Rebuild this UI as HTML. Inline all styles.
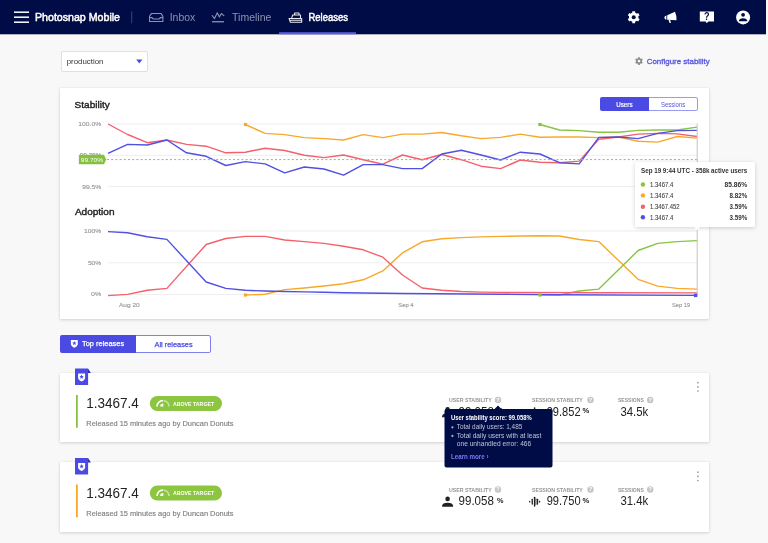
<!DOCTYPE html>
<html><head><meta charset="utf-8"><title>Releases - Photosnap Mobile</title>
<style>
html,body{margin:0;padding:0;}
body{width:768px;height:543px;overflow:hidden;background:#f8f8f8;font-family:"Liberation Sans", sans-serif;position:relative;}
.abs{position:absolute;}
.nav{left:0;top:0;width:766px;height:34px;background:#000c45;box-shadow:0 0.5px 0 rgba(0,12,69,0.6);}
.card{background:#fff;box-shadow:0 1px 3px rgba(0,0,0,0.15),0 0 1px rgba(0,0,0,0.10);border-radius:0;}
svg{position:absolute;left:0;top:0;overflow:visible;will-change:transform;}
svg text{font-family:"Liberation Sans", sans-serif;}
</style></head><body>
<div class="abs nav"></div>
<div class="abs" style="left:60.5px;top:50.5px;width:85px;height:19px;border:1px solid #dedcf8;border-radius:2px;background:#fff"></div>
<div class="abs card" style="left:60px;top:88px;width:649px;height:231px"></div>
<div class="abs" style="left:600.2px;top:96.6px;width:48.7px;height:14px;background:#4b4be3;border-radius:2px 0 0 2px"></div>
<div class="abs" style="left:648.9px;top:96.6px;width:48.4px;height:12px;border:1px solid #9a9af3;border-left:none;border-radius:0 2.5px 2.5px 0;background:#fff"></div>
<div class="abs" style="left:60.2px;top:335.1px;width:75.4px;height:17.5px;background:#4b4be3;border-radius:2px 0 0 2px"></div>
<div class="abs" style="left:135.6px;top:335.1px;width:74.5px;height:15.5px;border:1px solid #8080ec;border-left:none;border-radius:0 2.5px 2.5px 0;background:#fff"></div>
<div class="abs card" style="left:60px;top:373px;width:649px;height:69px"></div>
<div class="abs card" style="left:60px;top:462px;width:649px;height:70px"></div>
<svg width="768" height="543" viewBox="0 0 768 543">
<rect x="14" y="11.45" width="15" height="1.5" fill="#fff"/>
<rect x="14" y="16.45" width="15" height="1.5" fill="#fff"/>
<rect x="14" y="21.45" width="15" height="1.5" fill="#fff"/>
<text x="35.00" y="21.00" font-size="11.3" fill="#fff" stroke="#fff" stroke-width="0.5" textLength="85.00" lengthAdjust="spacingAndGlyphs">Photosnap Mobile</text>
<rect x="131.2" y="11.2" width="1" height="12" fill="#3b4376"/>
<path d="M149.5 21.5 V16.4 L151.5 13.4 H160.9 L162.9 16.4 V21.5 Z M149.5 17.6 H152 Q152.8 18.9 153.8 18.9 H158.6 Q159.6 18.9 160.4 17.6 H162.9" fill="none" stroke="#8d92b3" stroke-width="1.05" stroke-linejoin="round"/>
<text x="169.70" y="21.00" font-size="11.3" fill="#8d92b3" textLength="25.50" lengthAdjust="spacingAndGlyphs">Inbox</text>
<path d="M212.2 15.5 L214.5 18.6 L217.3 12.7 L219.4 16.9 L221.4 13.5 L223.9 15.6" fill="none" stroke="#8d92b3" stroke-width="1.1" stroke-linejoin="round" stroke-linecap="round"/>
<rect x="212" y="21.1" width="12" height="1.3" fill="#8d92b3"/>
<text x="232.10" y="21.00" font-size="11.3" fill="#8d92b3" textLength="39.20" lengthAdjust="spacingAndGlyphs">Timeline</text>
<path d="M289 18.4 H301.7 V22.2 H290.4 Z M289.6 20.3 H301.7 M291.6 18.4 L292.7 14.9 H300.5 V18.4 M294.6 14.9 V12.9 H299 V14.9" fill="none" stroke="#e8e9f0" stroke-width="1.05" stroke-linejoin="round"/>
<text x="308.50" y="21.00" font-size="11.3" fill="#fff" stroke="#fff" stroke-width="0.5" textLength="39.50" lengthAdjust="spacingAndGlyphs">Releases</text>
<rect x="279" y="32.2" width="77" height="2" fill="#5a5ae8"/>
<path d="M632.25 11.17 L635.15 11.17 L635.06 12.60 L637.00 13.72 L638.20 12.93 L639.64 15.44 L638.37 16.08 L638.37 18.32 L639.64 18.96 L638.20 21.47 L637.00 20.68 L635.06 21.80 L635.15 23.23 L632.25 23.23 L632.34 21.80 L630.40 20.68 L629.20 21.47 L627.76 18.96 L629.03 18.32 L629.03 16.08 L627.76 15.44 L629.20 12.93 L630.40 13.72 L632.34 12.60Z" fill="#fff"/><circle cx="633.7" cy="17.2" r="2.0" fill="#000c45"/>
<path d="M667.2 15.3 L675.0 11.7 Q676.9 15.8 676.5 20.3 L667.2 19.7 Z" fill="#fff"/><path d="M666.4 15.5 Q664.3 15.8 664.4 17.7 Q664.6 19.7 666.4 19.7 Z" fill="#fff"/><path d="M668.5 19.7 L669.6 23.1 L670.9 22.9 L670.2 19.8 Z" fill="#fff"/>
<path d="M699.8 11.6 H714 V21.6 H708.2 L706.9 23.2 L705.6 21.6 H699.8 Z" fill="#fff"/>
<text x="703.90" y="20.10" font-size="10.4" fill="#000c45" font-weight="700" textLength="5.50" lengthAdjust="spacingAndGlyphs">?</text>
<circle cx="743.1" cy="17.4" r="7" fill="#fff"/><circle cx="743.1" cy="14.8" r="1.9" fill="#000c45"/><path d="M738.8 21.2 Q739.2 18.4 743.1 18.3 Q747 18.4 747.4 21.2 Z" fill="#000c45"/>
<text x="66.70" y="64.10" font-size="7.7" fill="#333" textLength="36.70" lengthAdjust="spacingAndGlyphs">production</text>
<path d="M136.2 59.6 H142.4 L139.3 63.4 Z" fill="#4b4be3"/>
<path d="M638.07 57.21 L639.93 57.21 L639.85 58.22 L641.07 58.92 L641.90 58.35 L642.84 59.96 L641.92 60.40 L641.92 61.80 L642.84 62.24 L641.90 63.85 L641.07 63.28 L639.85 63.98 L639.93 64.99 L638.07 64.99 L638.15 63.98 L636.93 63.28 L636.10 63.85 L635.16 62.24 L636.08 61.80 L636.08 60.40 L635.16 59.96 L636.10 58.35 L636.93 58.92 L638.15 58.22Z" fill="#8a8a8a"/><circle cx="639" cy="61.1" r="1.3" fill="#f8f8f8"/>
<text x="646.70" y="63.80" font-size="7.6" fill="#5555dd" stroke="#5555dd" stroke-width="0.3" textLength="63.10" lengthAdjust="spacingAndGlyphs">Configure stability</text>
<text x="74.60" y="107.90" font-size="9.9" fill="#222" stroke="#222" stroke-width="0.4" textLength="35.20" lengthAdjust="spacingAndGlyphs">Stability</text>
<rect x="108" y="123.5" width="589" height="1" fill="#eeeeee"/>
<rect x="108" y="154.8" width="589" height="1" fill="#eeeeee"/>
<rect x="108" y="186.1" width="589" height="1" fill="#eeeeee"/>
<text x="78.30" y="125.90" font-size="6.2" fill="#999" stroke="#999" stroke-width="0.15" textLength="23.00" lengthAdjust="spacingAndGlyphs">100.0%</text>
<text x="80.00" y="157.40" font-size="6.2" fill="#999" stroke="#999" stroke-width="0.15" textLength="21.30" lengthAdjust="spacingAndGlyphs">99.75%</text>
<text x="82.30" y="188.90" font-size="6.2" fill="#999" stroke="#999" stroke-width="0.15" textLength="19.00" lengthAdjust="spacingAndGlyphs">99.5%</text>
<polyline points="539.93,124.50 559.57,130.00 579.20,130.60 598.83,132.30 618.47,132.30 638.10,130.40 657.73,130.00 677.37,130.00 697.00,127.10" fill="none" stroke="#88c440" stroke-width="1.4" stroke-linejoin="round" stroke-linecap="butt"/>
<polyline points="245.43,124.50 265.07,133.40 284.70,134.60 304.33,137.60 323.97,138.60 343.60,140.00 363.23,134.60 382.87,137.60 402.50,134.10 422.13,134.10 441.77,132.50 461.40,135.80 481.03,138.60 500.67,137.40 520.30,134.10 539.93,137.20 559.57,137.00 579.20,137.00 598.83,137.60 618.47,137.00 638.10,141.20 657.73,142.10 677.37,136.50 697.00,138.10" fill="none" stroke="#f8a92a" stroke-width="1.4" stroke-linejoin="round" stroke-linecap="butt"/>
<polyline points="108.00,124.00 127.63,134.50 147.27,142.70 166.90,140.00 186.53,144.40 206.17,146.20 225.80,152.80 245.43,152.20 265.07,148.20 284.70,150.50 304.33,155.20 323.97,157.60 343.60,155.00 363.23,159.70 382.87,164.20 402.50,155.00 422.13,159.70 441.77,154.50 461.40,159.70 481.03,166.20 500.67,168.60 520.30,160.00 539.93,162.30 559.57,162.70 579.20,161.10 598.83,139.30 618.47,137.00 638.10,134.10 657.73,133.40 677.37,133.90 697.00,136.50" fill="none" stroke="#f4606c" stroke-width="1.4" stroke-linejoin="round" stroke-linecap="butt"/>
<polyline points="108.00,153.30 127.63,144.40 147.27,145.00 166.90,140.00 186.53,152.80 206.17,156.30 225.80,165.50 245.43,161.60 265.07,163.90 284.70,172.80 304.33,167.00 323.97,169.00 343.60,175.20 363.23,164.60 382.87,164.60 402.50,168.60 422.13,168.60 441.77,154.00 461.40,150.30 481.03,155.00 500.67,160.00 520.30,152.20 539.93,154.00 559.57,162.70 579.20,163.90 598.83,137.40 618.47,137.00 638.10,138.60 657.73,133.40 677.37,130.60 697.00,130.40" fill="none" stroke="#5050e3" stroke-width="1.4" stroke-linejoin="round" stroke-linecap="butt"/>
<rect x="243.83333333333334" y="122.9" width="3.2" height="3.2" fill="#f8a92a"/>
<rect x="538.3333333333334" y="122.9" width="3.2" height="3.2" fill="#88c440"/>
<line x1="107" y1="159.6" x2="697" y2="159.6" stroke="#8bc34a" stroke-width="1" stroke-dasharray="2 2.2"/>
<path d="M78.9 154.8 H104 L106.2 159.5 L104 164.2 H78.9 Z" fill="#85c13f"/>
<text x="80.80" y="162.10" font-size="6.1" fill="#fff" textLength="22.20" lengthAdjust="spacingAndGlyphs">99.70%</text>
<text x="74.90" y="215.30" font-size="9.9" fill="#222" stroke="#222" stroke-width="0.4" textLength="39.60" lengthAdjust="spacingAndGlyphs">Adoption</text>
<rect x="108" y="230.5" width="589" height="1" fill="#eeeeee"/>
<rect x="108" y="262.3" width="589" height="1" fill="#eeeeee"/>
<rect x="108" y="294.0" width="589" height="1" fill="#eeeeee"/>
<text x="84.10" y="233.20" font-size="6.2" fill="#999" stroke="#999" stroke-width="0.15" textLength="17.20" lengthAdjust="spacingAndGlyphs">100%</text>
<text x="87.90" y="265.40" font-size="6.2" fill="#999" stroke="#999" stroke-width="0.15" textLength="13.40" lengthAdjust="spacingAndGlyphs">50%</text>
<text x="91.10" y="296.30" font-size="6.2" fill="#999" stroke="#999" stroke-width="0.15" textLength="10.20" lengthAdjust="spacingAndGlyphs">0%</text>
<polyline points="245.43,295.00 265.07,294.30 284.70,289.60 304.33,288.00 323.97,286.00 343.60,283.70 363.23,279.80 382.87,270.90 402.50,252.80 422.13,241.80 441.77,238.70 461.40,237.60 481.03,236.90 500.67,236.40 520.30,236.00 539.93,235.70 559.57,236.00 579.20,239.50 598.83,241.60 638.10,279.30 657.73,286.10 677.37,288.40 697.00,289.10" fill="none" stroke="#f8a92a" stroke-width="1.4" stroke-linejoin="round" stroke-linecap="butt"/>
<polyline points="539.93,295.00 559.57,295.00 579.20,291.00 598.83,289.10 638.10,250.50 657.73,243.40 677.37,241.60 697.00,240.60" fill="none" stroke="#88c440" stroke-width="1.4" stroke-linejoin="round" stroke-linecap="butt"/>
<polyline points="108.00,295.60 127.63,294.40 147.27,290.20 166.90,288.40 206.17,244.50 225.80,238.50 245.43,236.40 265.07,236.40 284.70,240.00 304.33,241.60 323.97,243.40 343.60,246.20 363.23,249.80 382.87,257.20 402.50,275.00 422.13,288.00 441.77,290.30 461.40,291.50 481.03,292.10 500.67,292.40 598.83,292.70 697.00,292.90" fill="none" stroke="#f4606c" stroke-width="1.4" stroke-linejoin="round" stroke-linecap="butt"/>
<polyline points="108.00,231.60 127.63,232.80 147.27,236.80 166.90,239.40 206.17,282.00 225.80,288.40 245.43,290.30 265.07,291.00 284.70,291.50 304.33,291.90 323.97,292.30 343.60,292.70 363.23,293.00 382.87,293.30 402.50,293.50 500.67,294.20 559.57,294.70 697.00,295.40" fill="none" stroke="#5050e3" stroke-width="1.4" stroke-linejoin="round" stroke-linecap="butt"/>
<rect x="243.83333333333334" y="293.4" width="3.2" height="3.2" fill="#f8a92a"/>
<rect x="538.3333333333334" y="293.4" width="3.2" height="3.2" fill="#88c440"/>
<rect x="696.7" y="123.5" width="1" height="172" fill="#c4c4c4"/>
<rect x="693.9" y="293.7" width="3.4" height="3.4" fill="#5050e3"/>
<text x="119.00" y="307.30" font-size="6.2" fill="#999" stroke="#999" stroke-width="0.15" textLength="20.70" lengthAdjust="spacingAndGlyphs">Aug 20</text>
<text x="398.30" y="306.90" font-size="6.2" fill="#999" stroke="#999" stroke-width="0.15" textLength="15.30" lengthAdjust="spacingAndGlyphs">Sep 4</text>
<text x="672.00" y="306.90" font-size="6.2" fill="#999" stroke="#999" stroke-width="0.15" textLength="18.20" lengthAdjust="spacingAndGlyphs">Sep 19</text>
<text x="616.20" y="106.80" font-size="7.3" fill="#fff" stroke="#fff" stroke-width="0.2" textLength="16.40" lengthAdjust="spacingAndGlyphs">Users</text>
<text x="661.00" y="106.80" font-size="7.3" fill="#5555dd" textLength="24.20" lengthAdjust="spacingAndGlyphs">Sessions</text>
<path d="M70.9 340 H77.80000000000001 V344.056 Q77.80000000000001 346.24 74.35000000000001 347.8 Q70.9 346.24 70.9 344.056 Z" fill="#fff"/><path d="M74.35 341.00 L74.96 342.44 L76.52 342.57 L75.33 343.60 L75.69 345.12 L74.35 344.31 L73.01 345.12 L73.37 343.60 L72.18 342.57 L73.74 342.44Z" fill="#4b4be3"/>
<text x="82.00" y="346.30" font-size="7.3" fill="#fff" stroke="#fff" stroke-width="0.25" textLength="42.20" lengthAdjust="spacingAndGlyphs">Top releases</text>
<text x="154.50" y="346.60" font-size="7.3" fill="#4b4be3" stroke="#4b4be3" stroke-width="0.25" textLength="38.10" lengthAdjust="spacingAndGlyphs">All releases</text>
<path d="M88 368.5 L90.9 373 H88 Z" fill="#2b2bb0"/>
<rect x="75" y="368.5" width="13.1" height="16.5" fill="#4b4be3"/>
<path d="M78.1 373.6 H85.1 V377.708 Q85.1 379.92 81.6 381.5 Q78.1 379.92 78.1 377.708 Z" fill="#fff"/><path d="M81.60 374.61 L82.22 376.07 L83.80 376.20 L82.60 377.24 L82.96 378.79 L81.60 377.97 L80.24 378.79 L80.60 377.24 L79.40 376.20 L80.98 376.07Z" fill="#4b4be3"/>
<rect x="76" y="395" width="1.8" height="32.8" fill="#88c440"/>
<text x="86.30" y="408.30" font-size="14.4" fill="#222" textLength="52.60" lengthAdjust="spacingAndGlyphs">1.3467.4</text>
<rect x="149.8" y="396" width="72.2" height="15" rx="7.5" fill="#8cc540"/>
<path d="M157.0 406.5 A6.0 6.0 0 0 1 163.0 400.5" fill="none" stroke="#fff" stroke-width="1.7"/>
<path d="M163.6 400.55 A6.0 6.0 0 0 1 169.0 406.5" fill="none" stroke="#fff" stroke-opacity="0.5" stroke-width="1.7"/>
<path d="M163.3 406.6 H160.1 A3.2 3.2 0 0 1 163.3 403.4 Z" fill="#fff"/>
<text x="172.90" y="405.90" font-size="5.4" fill="#fff" font-weight="700" textLength="41.30" lengthAdjust="spacingAndGlyphs">ABOVE TARGET</text>
<text x="86.30" y="426.00" font-size="7.7" fill="#808080" stroke="#808080" stroke-width="0.15" textLength="147.30" lengthAdjust="spacingAndGlyphs">Released 15 minutes ago by Duncan Donuts</text>
<text x="449.00" y="402.30" font-size="5.3" fill="#959595" font-weight="700" textLength="42.80" lengthAdjust="spacingAndGlyphs">USER STABILITY</text>
<circle cx="498" cy="400" r="3.2" fill="#c4c4c4"/>
<text x="496.30" y="401.90" font-size="4.6" fill="#fff" font-weight="700" textLength="3.40" lengthAdjust="spacingAndGlyphs">?</text>
<text x="532.00" y="402.30" font-size="5.3" fill="#959595" font-weight="700" textLength="50.80" lengthAdjust="spacingAndGlyphs">SESSION STABILITY</text>
<circle cx="590.5" cy="400" r="3.2" fill="#c4c4c4"/>
<text x="588.80" y="401.90" font-size="4.6" fill="#fff" font-weight="700" textLength="3.40" lengthAdjust="spacingAndGlyphs">?</text>
<text x="617.90" y="402.30" font-size="5.3" fill="#959595" font-weight="700" textLength="25.90" lengthAdjust="spacingAndGlyphs">SESSIONS</text>
<circle cx="650.2" cy="400" r="3.2" fill="#c4c4c4"/>
<text x="648.50" y="401.90" font-size="4.6" fill="#fff" font-weight="700" textLength="3.40" lengthAdjust="spacingAndGlyphs">?</text>
<circle cx="447.6" cy="409.4" r="2.3" fill="#222"/><path d="M442.1 417.3 V416.2 Q442.4 413.3 447.6 413.3 Q452.8 413.3 453.1 416.2 V417.3 Z" fill="#222"/>
<text x="458.60" y="415.90" font-size="12.4" fill="#222" textLength="35.20" lengthAdjust="spacingAndGlyphs">99.058</text>
<text x="497.10" y="413.30" font-size="7.6" fill="#222" font-weight="700" textLength="6.50" lengthAdjust="spacingAndGlyphs">%</text>
<rect x="529.05" y="411.30" width="1.3" height="1.8" rx="0.6" fill="#222"/>
<rect x="531.60" y="409.25" width="1.3" height="5.9" rx="0.6" fill="#222"/>
<rect x="533.90" y="407.20" width="1.4" height="10.0" rx="0.6" fill="#222"/>
<rect x="535.65" y="408.70" width="0.7" height="7.0" rx="0.6" fill="#222"/>
<rect x="536.85" y="409.25" width="1.3" height="5.9" rx="0.6" fill="#222"/>
<rect x="538.95" y="411.30" width="1.3" height="1.8" rx="0.6" fill="#222"/>
<text x="546.70" y="415.90" font-size="12.4" fill="#222" textLength="33.90" lengthAdjust="spacingAndGlyphs">99.852</text>
<text x="582.60" y="413.30" font-size="7.6" fill="#222" font-weight="700" textLength="6.80" lengthAdjust="spacingAndGlyphs">%</text>
<text x="620.40" y="415.90" font-size="12.4" fill="#222" textLength="27.80" lengthAdjust="spacingAndGlyphs">34.5k</text>
<circle cx="697.9" cy="382.7" r="0.85" fill="#999"/>
<circle cx="697.9" cy="386.9" r="0.85" fill="#999"/>
<circle cx="697.9" cy="391" r="0.85" fill="#999"/>
<path d="M88 458.0 L90.9 462.5 H88 Z" fill="#2b2bb0"/>
<rect x="75" y="458.0" width="13.1" height="16.5" fill="#4b4be3"/>
<path d="M78.1 463.1 H85.1 V467.208 Q85.1 469.42 81.6 471.0 Q78.1 469.42 78.1 467.208 Z" fill="#fff"/><path d="M81.60 464.11 L82.22 465.57 L83.80 465.70 L82.60 466.74 L82.96 468.29 L81.60 467.47 L80.24 468.29 L80.60 466.74 L79.40 465.70 L80.98 465.57Z" fill="#4b4be3"/>
<rect x="76" y="484.5" width="1.8" height="32.8" fill="#f8a92a"/>
<text x="86.30" y="497.80" font-size="14.4" fill="#222" textLength="52.60" lengthAdjust="spacingAndGlyphs">1.3467.4</text>
<rect x="149.8" y="485.5" width="72.2" height="15" rx="7.5" fill="#8cc540"/>
<path d="M157.0 496.0 A6.0 6.0 0 0 1 163.0 490.0" fill="none" stroke="#fff" stroke-width="1.7"/>
<path d="M163.6 490.05 A6.0 6.0 0 0 1 169.0 496.0" fill="none" stroke="#fff" stroke-opacity="0.5" stroke-width="1.7"/>
<path d="M163.3 496.1 H160.1 A3.2 3.2 0 0 1 163.3 492.9 Z" fill="#fff"/>
<text x="172.90" y="495.40" font-size="5.4" fill="#fff" font-weight="700" textLength="41.30" lengthAdjust="spacingAndGlyphs">ABOVE TARGET</text>
<text x="86.30" y="515.50" font-size="7.7" fill="#808080" stroke="#808080" stroke-width="0.15" textLength="147.30" lengthAdjust="spacingAndGlyphs">Released 15 minutes ago by Duncan Donuts</text>
<text x="449.00" y="491.80" font-size="5.3" fill="#959595" font-weight="700" textLength="42.80" lengthAdjust="spacingAndGlyphs">USER STABILITY</text>
<circle cx="498" cy="489.5" r="3.2" fill="#c4c4c4"/>
<text x="496.30" y="491.40" font-size="4.6" fill="#fff" font-weight="700" textLength="3.40" lengthAdjust="spacingAndGlyphs">?</text>
<text x="532.00" y="491.80" font-size="5.3" fill="#959595" font-weight="700" textLength="50.80" lengthAdjust="spacingAndGlyphs">SESSION STABILITY</text>
<circle cx="590.5" cy="489.5" r="3.2" fill="#c4c4c4"/>
<text x="588.80" y="491.40" font-size="4.6" fill="#fff" font-weight="700" textLength="3.40" lengthAdjust="spacingAndGlyphs">?</text>
<text x="617.90" y="491.80" font-size="5.3" fill="#959595" font-weight="700" textLength="25.90" lengthAdjust="spacingAndGlyphs">SESSIONS</text>
<circle cx="650.2" cy="489.5" r="3.2" fill="#c4c4c4"/>
<text x="648.50" y="491.40" font-size="4.6" fill="#fff" font-weight="700" textLength="3.40" lengthAdjust="spacingAndGlyphs">?</text>
<circle cx="447.6" cy="498.9" r="2.3" fill="#222"/><path d="M442.1 506.8 V505.7 Q442.4 502.8 447.6 502.8 Q452.8 502.8 453.1 505.7 V506.8 Z" fill="#222"/>
<text x="458.60" y="505.40" font-size="12.4" fill="#222" textLength="35.20" lengthAdjust="spacingAndGlyphs">99.058</text>
<text x="497.10" y="502.80" font-size="7.6" fill="#222" font-weight="700" textLength="6.50" lengthAdjust="spacingAndGlyphs">%</text>
<rect x="529.05" y="500.80" width="1.3" height="1.8" rx="0.6" fill="#222"/>
<rect x="531.60" y="498.75" width="1.3" height="5.9" rx="0.6" fill="#222"/>
<rect x="533.90" y="496.70" width="1.4" height="10.0" rx="0.6" fill="#222"/>
<rect x="535.65" y="498.20" width="0.7" height="7.0" rx="0.6" fill="#222"/>
<rect x="536.85" y="498.75" width="1.3" height="5.9" rx="0.6" fill="#222"/>
<rect x="538.95" y="500.80" width="1.3" height="1.8" rx="0.6" fill="#222"/>
<text x="546.70" y="505.40" font-size="12.4" fill="#222" textLength="33.90" lengthAdjust="spacingAndGlyphs">99.750</text>
<text x="582.60" y="502.80" font-size="7.6" fill="#222" font-weight="700" textLength="6.80" lengthAdjust="spacingAndGlyphs">%</text>
<text x="620.40" y="505.40" font-size="12.4" fill="#222" textLength="27.80" lengthAdjust="spacingAndGlyphs">31.4k</text>
<circle cx="697.9" cy="472.2" r="0.85" fill="#999"/>
<circle cx="697.9" cy="476.4" r="0.85" fill="#999"/>
<circle cx="697.9" cy="480.5" r="0.85" fill="#999"/>
</svg>
<div class="abs card" style="left:635px;top:162px;width:120px;height:64.5px;border-radius:2px;box-shadow:0 1px 4px rgba(0,0,0,0.18)"></div>
<svg width="768" height="543" viewBox="0 0 768 543">
<path d="M693.5 226.3 L697 230.6 L700.5 226.3 Z" fill="#fff"/>
<text x="641.00" y="172.90" font-size="7.1" fill="#333" font-weight="700" textLength="106.20" lengthAdjust="spacingAndGlyphs">Sep 19 9:44 UTC - 358k active users</text>
<circle cx="642.9" cy="184.5" r="2.2" fill="#88c440"/>
<text x="650.00" y="186.90" font-size="7.0" fill="#444" stroke="#444" stroke-width="0.1" textLength="23.30" lengthAdjust="spacingAndGlyphs">1.3467.4</text>
<text x="724.60" y="186.90" font-size="7.0" fill="#333" font-weight="700" textLength="22.60" lengthAdjust="spacingAndGlyphs">85.86%</text>
<circle cx="642.9" cy="195.4" r="2.2" fill="#f8a92a"/>
<text x="650.00" y="197.80" font-size="7.0" fill="#444" stroke="#444" stroke-width="0.1" textLength="23.30" lengthAdjust="spacingAndGlyphs">1.3467.4</text>
<text x="729.50" y="197.80" font-size="7.0" fill="#333" font-weight="700" textLength="17.70" lengthAdjust="spacingAndGlyphs">8.82%</text>
<circle cx="642.9" cy="206.7" r="2.2" fill="#f4606c"/>
<text x="650.00" y="209.10" font-size="7.0" fill="#444" stroke="#444" stroke-width="0.1" textLength="29.60" lengthAdjust="spacingAndGlyphs">1.3467.452</text>
<text x="729.50" y="209.10" font-size="7.0" fill="#333" font-weight="700" textLength="17.70" lengthAdjust="spacingAndGlyphs">3.59%</text>
<circle cx="642.9" cy="217.29999999999998" r="2.2" fill="#5050e3"/>
<text x="650.00" y="219.70" font-size="7.0" fill="#444" stroke="#444" stroke-width="0.1" textLength="23.30" lengthAdjust="spacingAndGlyphs">1.3467.4</text>
<text x="729.50" y="219.70" font-size="7.0" fill="#333" font-weight="700" textLength="17.70" lengthAdjust="spacingAndGlyphs">3.59%</text>
<path d="M446.5 409 H494.5 L498 405.4 L501.5 409 H550.5 Q552.5 409 552.5 411 V465.5 Q552.5 467.5 550.5 467.5 H446.5 Q444.5 467.5 444.5 465.5 V411 Q444.5 409 446.5 409 Z" fill="#000c45"/>
<text x="451.00" y="419.60" font-size="6.6" fill="#fff" font-weight="700" textLength="80.60" lengthAdjust="spacingAndGlyphs">User stability score: 99.058%</text>
<circle cx="452.4" cy="427.3" r="1.1" fill="#aeb2cc"/>
<text x="456.80" y="429.40" font-size="6.6" fill="#c0c3d8" textLength="65.50" lengthAdjust="spacingAndGlyphs">Total daily users: 1,485</text>
<circle cx="452.4" cy="435.9" r="1.1" fill="#aeb2cc"/>
<text x="456.80" y="438.00" font-size="6.6" fill="#c0c3d8" textLength="84.50" lengthAdjust="spacingAndGlyphs">Total daily users with at least</text>
<text x="456.80" y="445.80" font-size="6.6" fill="#c0c3d8" textLength="74.40" lengthAdjust="spacingAndGlyphs">one unhandled error: 466</text>
<text x="451.00" y="459.40" font-size="6.6" fill="#7b7bf5" font-weight="700" textLength="37.50" lengthAdjust="spacingAndGlyphs">Learn more ›</text>
</svg>
</body></html>
